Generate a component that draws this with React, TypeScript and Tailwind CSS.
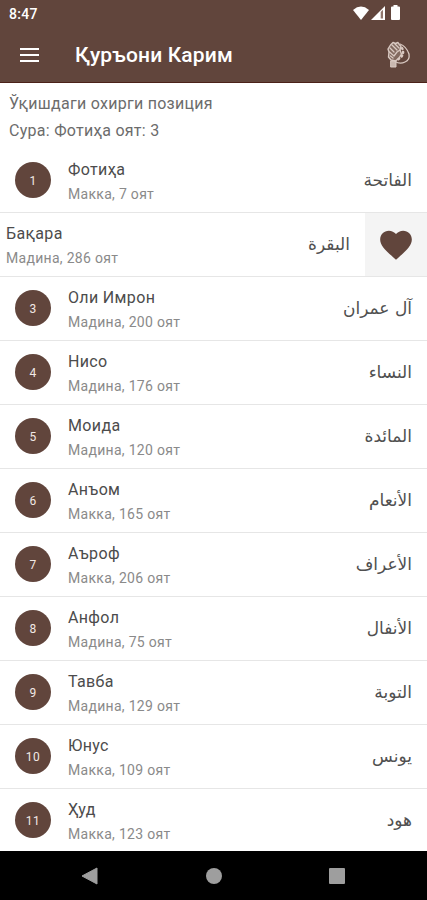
import { clsx } from 'clsx';

type Sura = {
    number: number;
    name: string;
    info: string;
    arabic: string;
};

const suras: Sura[] = [
    { number: 1, name: 'Фотиҳа', info: 'Макка, 7 оят', arabic: 'الفاتحة' },
    { number: 2, name: 'Бақара', info: 'Мадина, 286 оят', arabic: 'البقرة' },
    { number: 3, name: 'Оли Имрон', info: 'Мадина, 200 оят', arabic: 'آل عمران' },
    { number: 4, name: 'Нисо', info: 'Мадина, 176 оят', arabic: 'النساء' },
    { number: 5, name: 'Моида', info: 'Мадина, 120 оят', arabic: 'المائدة' },
    { number: 6, name: 'Анъом', info: 'Макка, 165 оят', arabic: 'الأنعام' },
    { number: 7, name: 'Аъроф', info: 'Макка, 206 оят', arabic: 'الأعراف' },
    { number: 8, name: 'Анфол', info: 'Мадина, 75 оят', arabic: 'الأنفال' },
    { number: 9, name: 'Тавба', info: 'Мадина, 129 оят', arabic: 'التوبة' },
    { number: 10, name: 'Юнус', info: 'Макка, 109 оят', arabic: 'يونس' },
    { number: 11, name: 'Ҳуд', info: 'Макка, 123 оят', arabic: 'هود' },
];

function StatusBar() {
    return (
        <div className="flex h-[27px] items-center justify-between pl-[9px] pr-[27px] text-white">
            <span className="text-[14px] font-medium leading-none tracking-[0.3px]">8:47</span>
            <div className="-mt-0.5 flex items-center">
                <svg width="16" height="14" viewBox="0 0 16 14" fill="currentColor">
                    <path d="M0 4Q8-2.8 16 4L8 14Z" />
                </svg>
                <svg width="14" height="14" viewBox="0 0 14 14" className="ml-0.5">
                    <path d="M0 14L14 0V14Z" fill="currentColor" />
                    <path d="M9.7 6L12 3.7V12.5H9.7Z" fill="#91776e" />
                </svg>
                <svg width="9" height="15" viewBox="0 0 9 15" fill="currentColor" className="ml-1.5">
                    <path d="M2.5 0h4v1.5H8Q9 1.5 9 2.5V14Q9 15 8 15H1Q0 15 0 14V2.5Q0 1.5 1 1.5H2.5Z" />
                </svg>
            </div>
        </div>
    );
}

function TasbihIcon() {
    return (
        <svg width="26" height="30" viewBox="0 0 26 30" fill="none" stroke="#d9c9c2" strokeLinecap="round" strokeLinejoin="round">
            {/* Hand */}
            <path d="M6 20L3.5 17L4 12L3 9L5.5 5L8 2.5L10.5 3.5L13 2.5L14.5 5L16 6L15 10L16.5 14L14 18L10.5 21Z" fill="#826a60" strokeWidth="1.4" />
            <path d="M5 8L9 12M7 5L12 10M10 4L14 8M4.5 12L9 16L12 12L15 10M5.5 16L8 18" strokeWidth="1.3" />
            <path d="M6 21H11V27H6Z" fill="#c8b7af" strokeWidth="1" />
            {/* Beads */}
            <path d="M15 4Q21 6 24 14Q25 20 20 22Q15 24.5 10 21.5" strokeWidth="1.3" />
            <path d="M17 8Q20 14 15 18L11 21" strokeWidth="2.4" strokeDasharray="1 3" />
        </svg>
    );
}

function SuraRow({ sura }: { sura: Sura }) {
    // the second row is swiped aside and shows its favourite button
    const swiped = sura.number === 2;

    return (
        <li className={clsx('flex h-16 items-stretch border-b border-[#e6e6e6]', swiped ? 'pl-1.5' : 'px-[15px]')}>
            {!swiped && (
                <div className="mr-[17px] mt-[13px] flex size-9 shrink-0 items-center justify-center rounded-full bg-[#61453c] pt-px text-xs tracking-[0.5px] text-[#f2e9e5]">
                    {sura.number}
                </div>
            )}
            <div className="grow pt-2.5">
                <p className="text-[16px] leading-[22px] tracking-[0.35px] text-[#4c4c4c]">{sura.name}</p>
                <p className="mt-[3px] text-[14px] leading-5 tracking-[0.3px] text-[#8a8a8a]">{sura.info}</p>
            </div>
            <p
                dir="rtl"
                lang="ar"
                className={clsx("pt-[19px] text-[17px] leading-6 text-[#505050] font-['DejaVu_Sans',sans-serif]", swiped && 'mr-[15px]')}
            >
                {sura.arabic}
            </p>
            {swiped && (
                <button className="flex w-[62px] items-center justify-center bg-[#f4f4f4]" aria-label="Favourite">
                    <svg width="38" height="38" viewBox="0 0 24 24" fill="#61453c">
                        <path d="M12 21.35l-1.45-1.32C5.4 15.36 2 12.28 2 8.5 2 5.42 4.42 3 7.5 3c1.74 0 3.41.81 4.5 2.09C13.09 3.81 14.76 3 16.5 3 19.58 3 22 5.42 22 8.5c0 3.78-3.4 6.86-8.55 11.54L12 21.35z" />
                    </svg>
                </button>
            )}
        </li>
    );
}

function NavigationBar() {
    return (
        <nav className="flex h-[49px] shrink-0 items-center bg-black pl-[81px] text-[#9e9e9e]">
            <svg width="17" height="18" viewBox="0 0 17 18" fill="currentColor">
                <path d="M16 1V17L1 9Z" stroke="currentColor" strokeLinejoin="round" />
            </svg>
            <div className="ml-[108px] size-4 rounded-full bg-current" />
            <div className="ml-[107px] size-4 rounded-[1px] bg-current" />
        </nav>
    );
}

export default function App() {
    return (
        <div className="flex h-[900px] w-full flex-col overflow-hidden bg-white font-[Roboto,sans-serif]">
            <header className="h-[83px] shrink-0 border-b border-[#4b2119] bg-[#61453c]">
                <StatusBar />
                <div className="flex h-[55px] items-center pl-5 pr-4 text-white">
                    <button className="flex w-[19px] flex-col gap-1" aria-label="Menu">
                        <span className="h-0.5 bg-white" />
                        <span className="h-0.5 bg-white" />
                        <span className="h-0.5 bg-white" />
                    </button>
                    <h1 className="ml-9 grow pt-0.5 text-[21px] font-medium leading-none tracking-[0.15px]">Қуръони Карим</h1>
                    <TasbihIcon />
                </div>
            </header>

            {/* Last reading position */}
            <section className="h-[66px] shrink-0 pl-[9px] pt-[7px] text-[16px] leading-[27px] tracking-[0.28px] text-[#6c6c6c]">
                <p>Ўқишдаги охирги позиция</p>
                <p>Сура: Фотиҳа оят: 3</p>
            </section>

            <ul className="min-h-0 grow overflow-hidden">
                {suras.map((sura) => (
                    <SuraRow key={sura.number} sura={sura} />
                ))}
            </ul>
            <NavigationBar />
        </div>
    );
}
